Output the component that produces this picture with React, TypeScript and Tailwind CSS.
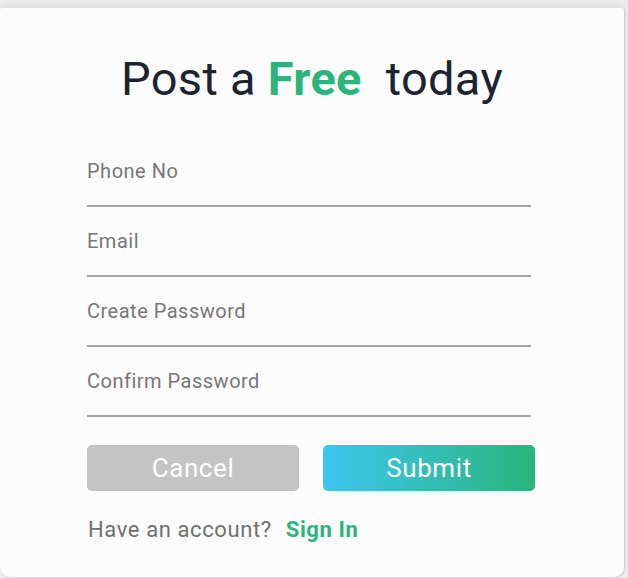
import React from "react";

export default function App() {
  const fields = ["Phone No", "Email", "Create Password", "Confirm Password"];
  return (
    <div className="w-[628px] h-[578px] bg-[#ededed] overflow-hidden" style={{ fontFamily: "Roboto, 'Noto Sans', sans-serif" }}>
      <div className="w-[624px] h-[569px] mt-[8px] bg-[#fdfcfd] rounded-b-[10px] rounded-t-[2px] shadow-[0_-3px_6px_rgba(0,0,0,0.07),1px_1px_2px_rgba(0,0,0,0.12)] flex flex-col">
        <h1 className="mt-[43px] text-center text-[47px] leading-[56px] text-[#1c2331] tracking-[0.3px]">
          Post a <span className="font-bold text-[#2db47c]">Free</span>&nbsp; today
        </h1>
        <div className="mt-[49px] ml-[87px] w-[444px] flex flex-col">
          {fields.map((f) => (
            <div key={f} className="h-[70px] flex flex-col justify-end border-b-[2px] border-[#a3a3a3] first:h-[51px]">
              <div className="text-[20px] leading-[24px] text-[#777777] mb-[22px] tracking-[0.5px]">{f}</div>
            </div>
          ))}
        </div>
        <div className="mt-[28px] ml-[87px] flex gap-[24px]">
          <button className="w-[212px] h-[46px] rounded-[5px] bg-[#c4c4c4] text-white text-[26px] tracking-[0.6px]">Cancel</button>
          <button className="w-[212px] h-[46px] rounded-[5px] bg-[linear-gradient(90deg,#3ec6f0,#2ab57c)] text-white text-[26px] tracking-[0.6px]">Submit</button>
        </div>
        <div className="mt-[26px] ml-[88px] flex items-center text-[22px] leading-[26px] tracking-[0.6px]">
          <span className="text-[#707070]">Have an account?</span>
          <span className="ml-[14px] font-bold text-[#2db47c]">Sign In</span>
        </div>
      </div>
    </div>
  );
}
